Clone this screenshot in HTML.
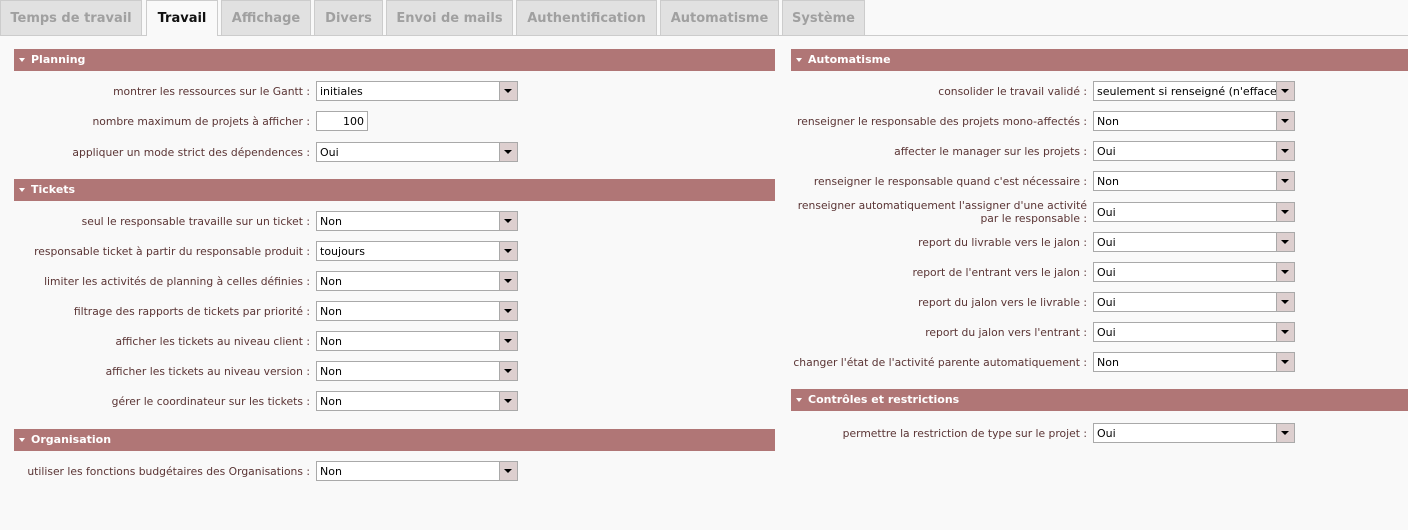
<!DOCTYPE html>
<html><head><meta charset="utf-8"><style>
body{margin:0;width:1408px;height:530px;background:#f9f9f9;font-family:"DejaVu Sans","Liberation Sans",sans-serif;position:relative;overflow:hidden}
.tabs{position:absolute;left:0;top:0;width:1408px;height:35px;border-bottom:1px solid #ccc}
.tab{position:absolute;top:0;height:35px;background:#e1e1e1;border:1px solid #ccc;border-bottom:none;box-sizing:border-box;color:#a0a0a0;font-weight:bold;font-size:13px;line-height:35px;text-align:center}
.tab.act{background:#f9f9f9;color:#111;height:36px}
.hd{position:absolute;height:22px;background:#b07676;color:#fff;font-weight:bold;font-size:11px;line-height:22px;box-sizing:border-box;padding-left:17px}
.hd:before{content:"";position:absolute;left:5px;top:9px;border-left:3.5px solid transparent;border-right:3.5px solid transparent;border-top:4px solid #fff}
.lb{position:absolute;text-align:right;font-size:10.75px;color:#5a3434;line-height:13px}
.sel{position:absolute;height:20px;background:#fff;border:1px solid #a9a9a9;box-sizing:border-box;font-size:11px;line-height:19px;padding-left:3px;color:#000;white-space:nowrap;overflow:hidden}
.sel:after{content:"";position:absolute;right:0;top:0;width:17px;height:18px;background:#ddcfcf;border-left:1px solid #a9a9a9}
.sel i{position:absolute;right:5px;top:7px;z-index:2;border-left:4px solid transparent;border-right:4px solid transparent;border-top:4px solid #000}
.inp{position:absolute;height:20px;background:#fff;border:1px solid #a9a9a9;box-sizing:border-box;font-size:11px;line-height:19px;text-align:right;padding-right:3px}
</style></head><body>
<div class="tabs">
<div class="tab" style="left:0;width:142px">Temps de travail</div>
<div class="tab act" style="left:146px;width:72px">Travail</div>
<div class="tab" style="left:221px;width:90px">Affichage</div>
<div class="tab" style="left:314px;width:69px">Divers</div>
<div class="tab" style="left:386px;width:127px">Envoi de mails</div>
<div class="tab" style="left:516px;width:141px">Authentification</div>
<div class="tab" style="left:660px;width:119px">Automatisme</div>
<div class="tab" style="left:782px;width:83px">Système</div>
</div>

<div class="hd" style="left:14px;top:49px;width:761px">Planning</div>
<div class="lb" style="left:0;width:310px;top:85px">montrer les ressources sur le Gantt :</div>
<div class="sel" style="left:316px;top:81px;width:202px">initiales<i></i></div>
<div class="lb" style="left:0;width:310px;top:115px">nombre maximum de projets à afficher :</div>
<div class="inp" style="left:316px;top:111px;width:52px">100</div>
<div class="lb" style="left:0;width:310px;top:146px">appliquer un mode strict des dépendences :</div>
<div class="sel" style="left:316px;top:142px;width:202px">Oui<i></i></div>

<div class="hd" style="left:14px;top:179px;width:761px">Tickets</div>
<div class="lb" style="left:0;width:310px;top:215px">seul le responsable travaille sur un ticket :</div>
<div class="sel" style="left:316px;top:211px;width:202px">Non<i></i></div>
<div class="lb" style="left:0;width:310px;top:245px">responsable ticket à partir du responsable produit :</div>
<div class="sel" style="left:316px;top:241px;width:202px">toujours<i></i></div>
<div class="lb" style="left:0;width:310px;top:275px">limiter les activités de planning à celles définies :</div>
<div class="sel" style="left:316px;top:271px;width:202px">Non<i></i></div>
<div class="lb" style="left:0;width:310px;top:305px">filtrage des rapports de tickets par priorité :</div>
<div class="sel" style="left:316px;top:301px;width:202px">Non<i></i></div>
<div class="lb" style="left:0;width:310px;top:335px">afficher les tickets au niveau client :</div>
<div class="sel" style="left:316px;top:331px;width:202px">Non<i></i></div>
<div class="lb" style="left:0;width:310px;top:365px">afficher les tickets au niveau version :</div>
<div class="sel" style="left:316px;top:361px;width:202px">Non<i></i></div>
<div class="lb" style="left:0;width:310px;top:395px">gérer le coordinateur sur les tickets :</div>
<div class="sel" style="left:316px;top:391px;width:202px">Non<i></i></div>

<div class="hd" style="left:14px;top:429px;width:761px">Organisation</div>
<div class="lb" style="left:0;width:310px;top:465px">utiliser les fonctions budgétaires des Organisations :</div>
<div class="sel" style="left:316px;top:461px;width:202px">Non<i></i></div>

<div class="hd" style="left:791px;top:49px;width:617px">Automatisme</div>
<div class="lb" style="left:780px;width:307px;top:85px">consolider le travail validé :</div>
<div class="sel" style="left:1093px;top:81px;width:202px">seulement si renseigné (n'efface<i></i></div>
<div class="lb" style="left:780px;width:307px;top:115px">renseigner le responsable des projets mono-affectés :</div>
<div class="sel" style="left:1093px;top:111px;width:202px">Non<i></i></div>
<div class="lb" style="left:780px;width:307px;top:145px">affecter le manager sur les projets :</div>
<div class="sel" style="left:1093px;top:141px;width:202px">Oui<i></i></div>
<div class="lb" style="left:780px;width:307px;top:175px">renseigner le responsable quand c'est nécessaire :</div>
<div class="sel" style="left:1093px;top:171px;width:202px">Non<i></i></div>
<div class="lb" style="left:780px;width:307px;top:199px">renseigner automatiquement l'assigner d'une activité<br>par le responsable :</div>
<div class="sel" style="left:1093px;top:202px;width:202px">Oui<i></i></div>
<div class="lb" style="left:780px;width:307px;top:236px">report du livrable vers le jalon :</div>
<div class="sel" style="left:1093px;top:232px;width:202px">Oui<i></i></div>
<div class="lb" style="left:780px;width:307px;top:266px">report de l'entrant vers le jalon :</div>
<div class="sel" style="left:1093px;top:262px;width:202px">Oui<i></i></div>
<div class="lb" style="left:780px;width:307px;top:296px">report du jalon vers le livrable :</div>
<div class="sel" style="left:1093px;top:292px;width:202px">Oui<i></i></div>
<div class="lb" style="left:780px;width:307px;top:326px">report du jalon vers l'entrant :</div>
<div class="sel" style="left:1093px;top:322px;width:202px">Oui<i></i></div>
<div class="lb" style="left:780px;width:307px;top:356px">changer l'état de l'activité parente automatiquement :</div>
<div class="sel" style="left:1093px;top:352px;width:202px">Non<i></i></div>

<div class="hd" style="left:791px;top:389px;width:617px">Contrôles et restrictions</div>
<div class="lb" style="left:780px;width:307px;top:427px">permettre la restriction de type sur le projet :</div>
<div class="sel" style="left:1093px;top:423px;width:202px">Oui<i></i></div>
</body></html>
